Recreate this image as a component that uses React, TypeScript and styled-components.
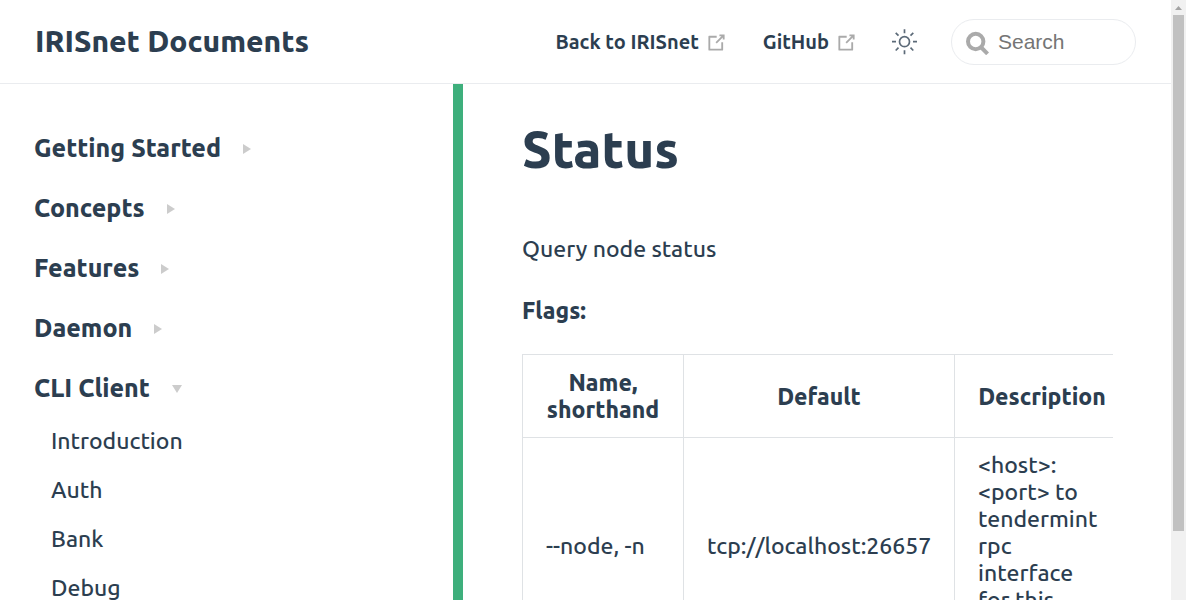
import React from "react";
import styled, { createGlobalStyle } from "styled-components";

const GlobalStyle = createGlobalStyle`
  *, *::before, *::after { box-sizing: border-box; }
  html, body { margin: 0; padding: 0; background: #fff; }
  body {
    font-family: Ubuntu, "Open Sans", "Noto Sans", sans-serif;
    font-size: 23px;
    font-weight: 500;
    color: #2c3e50;
    overflow: hidden;
  }
  a { color: inherit; text-decoration: none; }
  strong { font-weight: 800; }
`;

const Window = styled.div`
  display: flex;
  height: 100vh;
  overflow: hidden;
`;

const Page = styled.div`
  flex: 1;
  min-width: 0;
  display: flex;
  flex-direction: column;
`;

const Header = styled.header`
  flex: none;
  display: flex;
  align-items: center;
  justify-content: space-between;
  padding: 19px 35px 18px;
  border-bottom: 1px solid #eaecef;
`;

const SiteName = styled.a`
  font-size: 30px;
  line-height: 44px;
  padding-bottom: 2px;
  font-weight: 800;
`;

const Nav = styled.nav`
  display: flex;
  align-items: center;
`;

const NavLinks = styled.div`
  display: flex;
  gap: 35px;
  margin-right: 33px;
`;

const NavLink = styled.a`
  display: flex;
  align-items: center;
  gap: 6px;
  font-size: 20px;
  line-height: 32px;
  font-weight: 600;
`;

const ThemeButton = styled.button`
  display: flex;
  margin: 0 33px 0 0;
  padding: 0;
  border: 0;
  background: none;
  color: #2c3e50;
`;

const SearchBox = styled.label`
  display: flex;
  align-items: center;
  gap: 8px;
  width: 185px;
  height: 46px;
  padding: 0 14px;
  border: 1px solid #eaecef;
  border-radius: 23px;
`;

const SearchInput = styled.input`
  flex: 1;
  min-width: 0;
  padding: 0;
  border: 0;
  outline: 0;
  background: none;
  font-family: "Liberation Sans", Arial, sans-serif;
  font-size: 21px;
  line-height: 28px;
  &::placeholder { color: #757575; opacity: 1; }
`;

const Body = styled.div`
  flex: 1;
  min-height: 0;
  display: flex;
`;

const Sidebar = styled.aside`
  flex: none;
  width: 463px;
  padding: 34px;
  border-right: 10px solid #3eaf7c;
  overflow: hidden;
`;

const GroupHeading = styled.button`
  display: flex;
  align-items: center;
  gap: 22px;
  height: 60px;
  padding: 0;
  border: 0;
  background: none;
  font: inherit;
  font-size: 25px;
  font-weight: 800;
  color: inherit;
`;

const Arrow = styled.span<{ $open?: boolean }>`
  margin-top: 2px;
  border: 5px solid transparent;
  ${(p) =>
    p.$open
      ? "border-top: 8px solid #ccc; border-bottom: 0;"
      : "border-left: 8px solid #ccc; border-right: 0;"}
`;

const GroupLinks = styled.ul`
  margin: -2px 0 0;
  padding: 0 0 0 17px;
  list-style: none;
`;

const GroupLink = styled.a`
  display: block;
  line-height: 49px;
`;

const Content = styled.main`
  flex: 1;
  min-width: 0;
  padding: 31px 58px 0 59px;
  overflow: hidden;
`;

const Title = styled.h1`
  margin: 0 0 46px;
  font-size: 51px;
  line-height: 68px;
  font-weight: 800;
`;

const Paragraph = styled.p`
  margin: 0 0 22px;
  line-height: 40px;
`;

const TableScroll = styled.div`
  margin-top: 23px;
  overflow-x: auto;
`;

const Table = styled.table`
  width: 608px;
  table-layout: fixed;
  border-collapse: collapse;
  line-height: 27px;
`;

const Column = styled.col<{ $width: number }>`
  width: ${(p) => p.$width}px;
`;

const HeadCell = styled.th`
  padding: 14px 23px;
  border: 1px solid #dfe2e5;
  font-weight: 800;
`;

const Cell = styled.td`
  padding: 13px 23px 15px;
  border: 1px solid #dfe2e5;
`;

const ScrollTrack = styled.div`
  flex: none;
  width: 15px;
  display: flex;
  flex-direction: column;
  align-items: center;
  background: #f1f1f1;
`;

const ScrollArrow = styled.svg`
  flex: none;
  display: block;
`;

const ScrollThumb = styled.div`
  width: 11px;
  height: 86%;
  background: #c1c1c1;
`;

const OutboundIcon = () => (
  <svg width="23" height="23" viewBox="0 0 100 100" fill="#aaa" aria-hidden="true">
    <path d="M18.8,85.1h56l0,0c2.2,0,4-1.8,4-4v-32h-8v28h-48v-48h28v-8h-32l0,0c-2.2,0-4,1.8-4,4v56C14.8,83.3,16.6,85.1,18.8,85.1z" />
    <polygon points="45.7,48.7 51.3,54.3 77.2,28.5 77.2,37.2 85.2,37.2 85.2,14.9 62.8,14.9 62.8,22.9 71.5,22.9" />
  </svg>
);

const SunIcon = () => (
  <svg width="27" height="27" viewBox="0 0 27 27" fill="none" stroke="#5c6a78" strokeWidth="1.7" aria-hidden="true">
    <circle cx="13.5" cy="12.7" r="5" />
    <path d="M13.5 .2v4M13.5 21.2v4M1 12.7h4M22 12.7h4M4.7 3.9l2.8 2.8M19.5 18.7l2.8 2.8M4.7 21.5l2.8-2.8M19.5 6.7l2.8-2.8" />
  </svg>
);

const SearchIcon = () => (
  <svg width="24" height="26" viewBox="0 0 24 26" fill="none" stroke="#aaa" strokeWidth="4" aria-hidden="true">
    <circle cx="9.7" cy="12.5" r="7.7" />
    <path d="M14.8 18l6.8 6.8" />
  </svg>
);

const groups = ["Getting Started", "Concepts", "Features", "Daemon"];
const cliLinks = ["Introduction", "Auth", "Bank", "Debug"];

export default function App() {
  return (
    <>
      <GlobalStyle />
      <Window>
        <Page>
          <Header>
            <SiteName href="#">IRISnet Documents</SiteName>
            <Nav>
              <NavLinks>
                <NavLink href="#">Back to IRISnet<OutboundIcon /></NavLink>
                <NavLink href="#">GitHub<OutboundIcon /></NavLink>
              </NavLinks>
              <ThemeButton type="button" aria-label="Toggle theme"><SunIcon /></ThemeButton>
              <SearchBox>
                <SearchIcon />
                <SearchInput type="text" placeholder="Search" aria-label="Search" />
              </SearchBox>
            </Nav>
          </Header>
          <Body>
            <Sidebar>
              {groups.map((name) => (
                <GroupHeading type="button" key={name}>{name}<Arrow /></GroupHeading>
              ))}
              <GroupHeading type="button" aria-expanded="true">CLI Client<Arrow $open /></GroupHeading>
              <GroupLinks>
                {cliLinks.map((name) => (
                  <li key={name}><GroupLink href="#">{name}</GroupLink></li>
                ))}
              </GroupLinks>
            </Sidebar>
            <Content>
              <Title>Status</Title>
              <Paragraph>Query node status</Paragraph>
              <Paragraph><strong>Flags:</strong></Paragraph>
              <TableScroll>
                <Table>
                  <colgroup>
                    <Column $width={161} />
                    <Column $width={271} />
                    <Column $width={175} />
                  </colgroup>
                  <thead>
                    <tr>
                      <HeadCell>Name, shorthand</HeadCell>
                      <HeadCell>Default</HeadCell>
                      <HeadCell>Description</HeadCell>
                    </tr>
                  </thead>
                  <tbody>
                    <tr>
                      <Cell>--node, -n</Cell>
                      <Cell>tcp://localhost:26657</Cell>
                      <Cell>&lt;host&gt;:&lt;port&gt; to tendermint rpc interface for this chain</Cell>
                    </tr>
                  </tbody>
                </Table>
              </TableScroll>
            </Content>
          </Body>
        </Page>
        <ScrollTrack>
          <ScrollArrow width="15" height="15" viewBox="0 0 15 15" aria-hidden="true">
            <path d="M4 10h7L7.5 6z" fill="#a3a3a3" />
          </ScrollArrow>
          <ScrollThumb />
        </ScrollTrack>
      </Window>
    </>
  );
}
